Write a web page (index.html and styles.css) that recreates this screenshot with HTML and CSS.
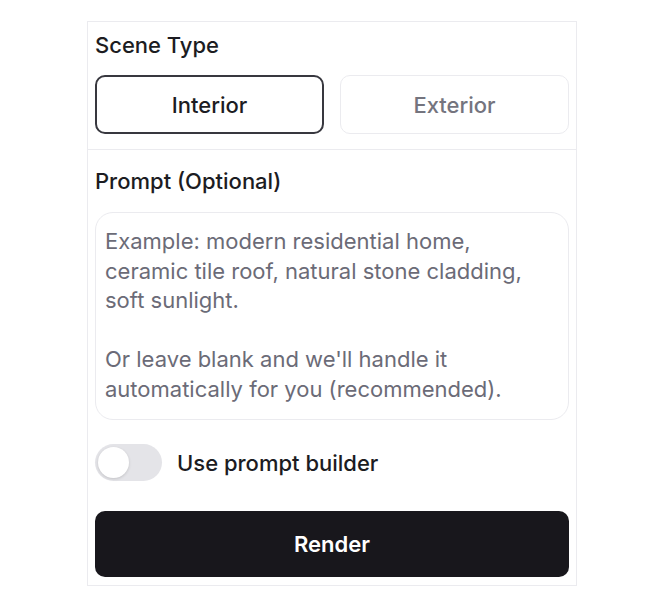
FILE: index.html
```html
<!DOCTYPE html>
<html lang="en">
<head>
<meta charset="utf-8">
<title>Render settings</title>
<link rel="stylesheet" href="styles.css">
</head>
<body>
<div class="card">
  <section class="section scene">
    <div class="label">Scene Type</div>
    <div class="seg">
      <button class="opt active">Interior</button>
      <button class="opt">Exterior</button>
    </div>
  </section>
  <section class="section prompt">
    <div class="label">Prompt (Optional)</div>
    <div class="textbox">
      <div class="ph">Example: modern residential home,</div>
      <div class="ph">ceramic tile roof, natural stone cladding,</div>
      <div class="ph">soft sunlight.</div>
      <div class="ph">&nbsp;</div>
      <div class="ph">Or leave blank and we'll handle it</div>
      <div class="ph">automatically for you (recommended).</div>
    </div>
    <div class="toggle-row">
      <span class="switch"><span class="knob"></span></span>
      <span class="toggle-label">Use prompt builder</span>
    </div>
    <button class="render">Render</button>
  </section>
</div>
</body>
</html>
```

FILE: styles.css
```css
* { box-sizing: border-box; }
html, body { margin: 0; padding: 0; background: #ffffff; }
body {
  font-family: Inter, "Noto Sans", sans-serif;
  color: #1a1a1f;
  padding-top: 21px;
}
.card {
  width: 490px;
  margin-left: 87px;
  border: 1px solid #ebebef;
  background: #fff;
}
.section { padding: 0 7px; }
.scene {
  padding-top: 8px;
  padding-bottom: 15px;
  border-bottom: 1px solid #ebebef;
}
.label {
  font-size: 22px;
  line-height: 30px;
  font-weight: 500;
  color: #1c1c22;
}
.seg {
  margin-top: 15px;
  display: grid;
  grid-template-columns: 1fr 1fr;
  gap: 16px;
}
.opt {
  height: 59px;
  border-radius: 10px;
  border: 1.5px solid #ebebef;
  background: #fff;
  font-family: inherit;
  font-size: 22px;
  font-weight: 500;
  color: #74747e;
  padding: 0;
}
.opt.active {
  border: 2px solid #38383f;
  color: #1c1c22;
}
.prompt {
  padding-top: 16px;
  padding-bottom: 8px;
}
.textbox {
  margin-top: 16px;
  height: 208px;
  border: 1px solid #ebebef;
  border-radius: 18px;
  padding: 14px 9px 0;
}
.ph {
  font-size: 22px;
  line-height: 29.6px;
  color: #6b6b77;
  white-space: nowrap;
}
.toggle-row {
  margin-top: 24px;
  display: flex;
  align-items: center;
  gap: 15px;
}
.switch {
  width: 67px;
  height: 37px;
  border-radius: 19px;
  background: #e4e4e8;
  display: flex;
  align-items: center;
  padding: 3px;
}
.knob {
  width: 31px;
  height: 31px;
  border-radius: 50%;
  background: #fff;
  box-shadow: 0 1px 3px rgba(0,0,0,0.15);
}
.toggle-label {
  font-size: 22px;
  line-height: 30px;
  font-weight: 500;
  color: #1c1c22;
}
.render {
  margin-top: 30px;
  width: 100%;
  height: 66px;
  border: none;
  border-radius: 10px;
  background: #18171c;
  color: #fff;
  font-family: inherit;
  font-size: 22px;
  font-weight: 600;
  display: block;
}
```
